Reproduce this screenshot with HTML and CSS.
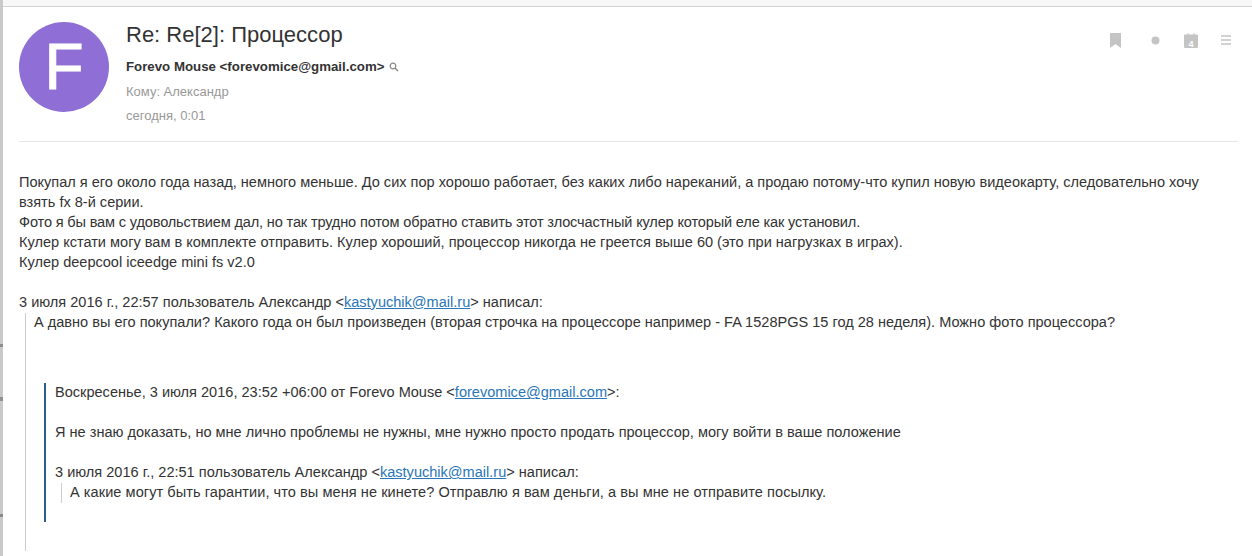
FILE: index.html
```html
<!DOCTYPE html>
<html lang="ru">
<head>
    <meta charset="UTF-8">
    <title>Re: Re[2]: Процессор</title>
    <link rel="stylesheet" href="styles.css">
</head>
<body>
    <div class="topbar"></div>
    <div class="letter">
        <div class="head">
            <div class="avatar">F</div>
            <div class="info">
                <h1 class="subject">Re: Re[2]: Процессор</h1>
                <div class="sender">Forevo Mouse &lt;forevomice@gmail.com&gt;
                    <svg class="search" width="10" height="10" viewBox="0 0 10 10"><circle cx="4" cy="4" r="2.8" fill="none" stroke="#888" stroke-width="1.2"/><path d="M6 6l3 3" stroke="#888" stroke-width="1.4"/></svg>
                </div>
                <div class="meta to">Кому: Александр</div>
                <div class="meta date">сегодня, 0:01</div>
            </div>
            <div class="actions">
                <svg width="11" height="15" viewBox="0 0 11 15"><path d="M0 0h11v15L5.500 11 0 15z" fill="#c4c4c4"/></svg>
                <svg class="dot" width="9" height="9" viewBox="0 0 9 9"><circle cx="4.500" cy="4.500" r="4" fill="#c4c4c4"/></svg>
                <svg class="cal" width="14" height="15" viewBox="0 0 14 15"><path d="M1 1.500h2.500V0h1v1.500h5V0h1v1.500H13a1 1 0 0 1 1 1V14a1 1 0 0 1-1 1H1a1 1 0 0 1-1-1V2.500a1 1 0 0 1 1-1z" fill="#c4c4c4"/><text x="7" y="13.500" class="cal-num">4</text></svg>
                <svg class="menu" width="10" height="10" viewBox="0 0 10 10"><path d="M0 1h10M0 5h10M0 9h10" stroke="#c4c4c4" stroke-width="1.600"/></svg>
            </div>
        </div>

        <div class="body">
            <p>Покупал я его около года назад, немного меньше. До сих пор хорошо работает, без каких либо нареканий, а продаю потому-что купил новую видеокарту, следовательно хочу<br>взять fx 8-й серии.<br>
            <span class="tight">Фото я бы вам с удовольствием дал, но так трудно потом обратно ставить этот злосчастный кулер который еле как установил.</span><br>
            Кулер кстати могу вам в комплекте отправить. Кулер хороший, процессор никогда не греется выше 60 (это при нагрузках в играх).<br>
            Кулер deepcool iceedge mini fs v2.0</p>

            <p class="said">3 июля 2016 г., 22:57 пользователь Александр &lt;<a href="#">kastyuchik@mail.ru</a>&gt; написал:</p>
            <div class="quote">
                <p>А давно вы его покупали? Какого года он был произведен (вторая строчка на процессоре например - FA 1528PGS 15 год 28 неделя). Можно фото процессора?</p>
                <div class="inner">
                    <p>Воскресенье, 3 июля 2016, 23:52 +06:00 от Forevo Mouse &lt;<a href="#">forevomice@gmail.com</a>&gt;:</p>
                    <p class="gap">Я не знаю доказать, но мне лично проблемы не нужны, мне нужно просто продать процессор, могу войти в ваше положение</p>
                    <p class="gap">3 июля 2016 г., 22:51 пользователь Александр &lt;<a href="#">kastyuchik@mail.ru</a>&gt; написал:</p>
                    <p class="small-quote">А какие могут быть гарантии, что вы меня не кинете? Отправлю я вам деньги, а вы мне не отправите посылку.</p>
                </div>
            </div>
        </div>
    </div>
</body>
</html>
```

FILE: styles.css
```css
html, body { margin: 0; height: 556px; overflow: hidden; }
body {
    font-family: "Liberation Sans", Arial, sans-serif;
    color: #333;
    padding-left: 3px;
    background: white linear-gradient(#c9c9c9 344px, #8e8e8e 344px, #8e8e8e 347px, #c9c9c9 347px, #c9c9c9 397px, #909090 397px, #909090 401px, #c9c9c9 401px, #c9c9c9 514px, #8a8a8a 514px, #8a8a8a 517px, #c9c9c9 517px) no-repeat left top / 3px 100%;
}
p { margin: 0; }
a { color: #2a76b8; text-decoration: underline; }

.topbar { height: 6px; background: #f7f7f7; border-bottom: 1px solid #d2d2d2; }

.letter { padding: 15px 14px 0 16px; }

.head { display: flex; height: 119px; border-bottom: 1px solid #e6e6e6; }
.avatar { width: 90px; height: 90px; border-radius: 50%; background: #8f6fd6; color: white; font-size: 64px; line-height: 90px; text-align: center; flex-shrink: 0; -webkit-text-stroke: 1px white; }
.info { margin-left: 17px; flex: 1; }
.subject { margin: 0; font-size: 22px; font-weight: normal; line-height: 26px; color: #333; }
.sender { margin-top: 11px; font-size: 13.270px; font-weight: bold; line-height: 16px; }
.search { margin-left: 1px; vertical-align: -1px; }
.meta { font-size: 13px; color: #999; line-height: 16px; }
.to { margin-top: 9px; }
.date { margin-top: 8px; }

.actions { display: flex; align-items: center; height: 16px; margin-top: 10px; padding-right: 7px; }
.dot { margin-left: 30px; }
.cal { margin-left: 24px; }
.menu { margin-left: 23px; }
.cal-num { font-size: 9px; font-weight: bold; fill: white; text-anchor: middle; }

.body { font-size: 14.560px; line-height: 19.900px; padding-top: 31px; }
.tight { letter-spacing: -0.150px; }
.said { margin-top: 20px; margin-bottom: 1px; }
.quote { border-left: 1px solid #ccc; margin-left: 6px; padding-left: 8px; height: 238px; }
.inner { border-left: 2px solid #2a5d8f; margin-top: 50px; margin-left: 10px; padding-left: 9px; height: 139px; }
.gap { margin-top: 20px; }
.small-quote { border-left: 1px solid #ccc; margin-left: 6px; padding-left: 8px; letter-spacing: 0.060px; }
```
